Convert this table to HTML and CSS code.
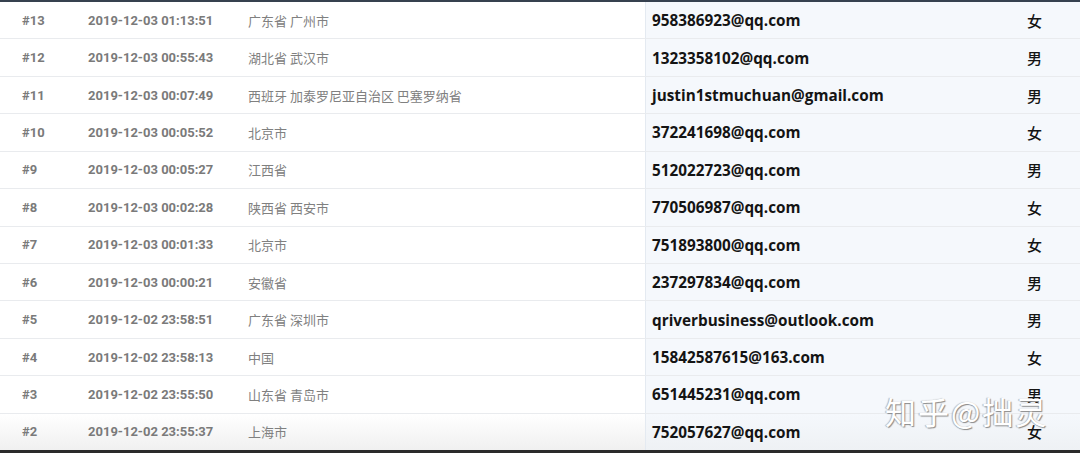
FILE: index.html
```html
<!DOCTYPE html>
<html lang="zh">
<head>
<meta charset="utf-8">
<link rel="stylesheet" href="styles.css">
</head>
<body>
<div class="table">
  <div class="row"><div class="c id">#13</div><div class="c date">2019-12-03 01:13:51</div><div class="c loc">广东省 广州市</div><div class="c mail">958386923@qq.com</div><div class="c sex">女</div></div>
  <div class="row"><div class="c id">#12</div><div class="c date">2019-12-03 00:55:43</div><div class="c loc">湖北省 武汉市</div><div class="c mail">1323358102@qq.com</div><div class="c sex">男</div></div>
  <div class="row"><div class="c id">#11</div><div class="c date">2019-12-03 00:07:49</div><div class="c loc">西班牙 加泰罗尼亚自治区 巴塞罗纳省</div><div class="c mail">justin1stmuchuan@gmail.com</div><div class="c sex">男</div></div>
  <div class="row"><div class="c id">#10</div><div class="c date">2019-12-03 00:05:52</div><div class="c loc">北京市</div><div class="c mail">372241698@qq.com</div><div class="c sex">女</div></div>
  <div class="row"><div class="c id">#9</div><div class="c date">2019-12-03 00:05:27</div><div class="c loc">江西省</div><div class="c mail">512022723@qq.com</div><div class="c sex">男</div></div>
  <div class="row"><div class="c id">#8</div><div class="c date">2019-12-03 00:02:28</div><div class="c loc">陕西省 西安市</div><div class="c mail">770506987@qq.com</div><div class="c sex">女</div></div>
  <div class="row"><div class="c id">#7</div><div class="c date">2019-12-03 00:01:33</div><div class="c loc">北京市</div><div class="c mail">751893800@qq.com</div><div class="c sex">女</div></div>
  <div class="row"><div class="c id">#6</div><div class="c date">2019-12-03 00:00:21</div><div class="c loc">安徽省</div><div class="c mail">237297834@qq.com</div><div class="c sex">男</div></div>
  <div class="row"><div class="c id">#5</div><div class="c date">2019-12-02 23:58:51</div><div class="c loc">广东省 深圳市</div><div class="c mail">qriverbusiness@outlook.com</div><div class="c sex">男</div></div>
  <div class="row"><div class="c id">#4</div><div class="c date">2019-12-02 23:58:13</div><div class="c loc">中国</div><div class="c mail">15842587615@163.com</div><div class="c sex">女</div></div>
  <div class="row"><div class="c id">#3</div><div class="c date">2019-12-02 23:55:50</div><div class="c loc">山东省 青岛市</div><div class="c mail">651445231@qq.com</div><div class="c sex">男</div></div>
  <div class="row last"><div class="c id">#2</div><div class="c date">2019-12-02 23:55:37</div><div class="c loc">上海市</div><div class="c mail">752057627@qq.com</div><div class="c sex">女</div></div>
  <div class="watermark">知乎@拙灵</div>
</div>
</body>
</html>
```
FILE: styles.css
```css
html, body {
  margin: 0;
  padding: 0;
  background: #ffffff;
}
body {
  width: 1080px;
  height: 453px;
  overflow: hidden;
}
.table {
  position: relative;
  border-top: 2px solid #36414f;
  border-bottom: 3px solid #2a2a2a;
  height: 448px;
  box-sizing: content-box;
  display: flex;
  flex-direction: column;
}
.row {
  display: grid;
  grid-template-columns: 88px 160px 397px 382px 1fr;
  flex: 1 1 0;
  border-bottom: 1px solid #e9ebee;
  box-sizing: border-box;
  align-items: stretch;
}
.row.last {
  border-bottom: none;
  background: linear-gradient(#ffffff, #f0f0f0);
}
.c {
  display: flex;
  align-items: center;
  white-space: nowrap;
}
.id {
  padding-left: 22px;
  font-family: Roboto, "Liberation Sans", sans-serif;
  font-weight: 700;
  font-size: 13px;
  color: #7a7a7a;
}
.date {
  font-family: Roboto, "Liberation Sans", sans-serif;
  font-weight: 700;
  font-size: 13px;
  color: #7a7a7a;
}
.loc {
  font-family: "Noto Sans CJK SC", sans-serif;
  font-size: 13px;
  color: #808080;
}
.mail {
  padding-left: 6px;
  font-family: "Open Sans", "Liberation Sans", sans-serif;
  font-weight: 700;
  font-size: 15.3px;
  color: #141414;
  background: #f5f8fc;
  border-left: 1px solid #e4eaf1;
}
.sex {
  font-family: "Noto Sans CJK SC", sans-serif;
  font-weight: 500;
  font-size: 15px;
  color: #141414;
  background: #f5f8fc;
}
.row.last .mail, .row.last .sex {
  background: linear-gradient(#f5f8fc, #eef1f4);
}
.watermark {
  position: absolute;
  left: 885px;
  top: 386px;
  font-family: "Noto Sans CJK SC", sans-serif;
  font-size: 31px;
  color: #ffffff;
  letter-spacing: 2px;
  text-shadow: 1px 1px 1px #8a8a8a, -1px 0 1px #b0b0b0;
  white-space: nowrap;
}
```
